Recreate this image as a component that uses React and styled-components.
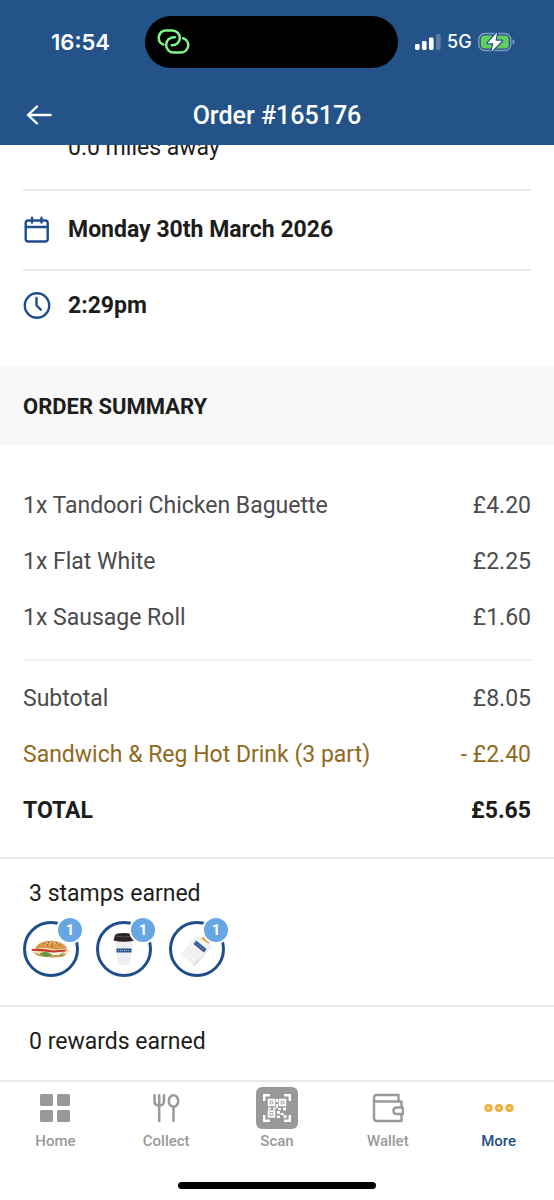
import styled, { createGlobalStyle } from "styled-components";

const GlobalStyle = createGlobalStyle`
    * {
        box-sizing: border-box;
    }
    body {
        margin: 0;
        background: #fff;
        color: #1d1d1b;
        font-family: Roboto, "Liberation Sans", sans-serif;
        font-size: 23px;
        line-height: 28px;
    }
    h1, h2, p, ul, dl, dd {
        margin: 0;
        padding: 0;
    }
    button {
        padding: 0;
        border: 0;
        background: none;
        font: inherit;
        color: inherit;
        cursor: pointer;
    }
`

const items = [
    { name: "1x Tandoori Chicken Baguette", price: "£4.20" },
    { name: "1x Flat White", price: "£2.25" },
    { name: "1x Sausage Roll", price: "£1.60" },
];

const totals = [
    { name: "Subtotal", price: "£8.05" },
    { name: "Sandwich & Reg Hot Drink (3 part)", price: "- £2.40", tone: "discount" },
    { name: "TOTAL", price: "£5.65", tone: "total" },
];

const stamps = [
    { name: "Baguette", count: 1, art: <BaguetteArt /> },
    { name: "Hot drink", count: 1, art: <CupArt /> },
    { name: "Sausage roll", count: 1, art: <BagArt /> },
];

const tabs = [
    { name: "Home", icon: <HomeIcon /> },
    { name: "Collect", icon: <CollectIcon /> },
    { name: "Scan", icon: <ScanIcon /> },
    { name: "Wallet", icon: <WalletIcon /> },
    { name: "More", icon: <MoreIcon />, active: true },
];

function App() {
    return (
        <Page>
            <GlobalStyle />
            <Header>
                <StatusBar>
                    <Clock>16:54</Clock>
                    <Island>
                        <LinkIcon />
                    </Island>
                    <StatusRight>
                        <SignalIcon />
                        <span>5G</span>
                        <BatteryIcon />
                    </StatusRight>
                </StatusBar>
                <TitleBar>
                    <BackButton aria-label="Back">
                        <BackIcon />
                    </BackButton>
                    <Title>Order #165176</Title>
                </TitleBar>
            </Header>
            <Content>
                <Details>
                    <Distance>0.0 miles away</Distance>
                    <DetailRow>
                        <CalendarIcon />
                        <p>Monday 30th March 2026</p>
                    </DetailRow>
                    <DetailRow>
                        <TimeIcon />
                        <p>2:29pm</p>
                    </DetailRow>
                </Details>
                <SectionTitle>ORDER SUMMARY</SectionTitle>
                <Summary>
                    <PriceList>
                        {items.map((item) => (
                            <PriceRow key={item.name}>
                                <dt>{item.name}</dt>
                                <dd>{item.price}</dd>
                            </PriceRow>
                        ))}
                    </PriceList>
                    <PriceList>
                        {totals.map((item) => (
                            <PriceRow key={item.name} $tone={item.tone}>
                                <dt>{item.name}</dt>
                                <dd>{item.price}</dd>
                            </PriceRow>
                        ))}
                    </PriceList>
                </Summary>
                <Earned>
                    <EarnedTitle>3 stamps earned</EarnedTitle>
                    <StampList>
                        {stamps.map((stamp) => (
                            <Stamp key={stamp.name} aria-label={stamp.name}>
                                {stamp.art}
                                <Badge>{stamp.count}</Badge>
                            </Stamp>
                        ))}
                    </StampList>
                </Earned>
                <Earned>
                    <EarnedTitle>0 rewards earned</EarnedTitle>
                </Earned>
            </Content>
            <Footer>
                <TabBar>
                    {tabs.map((tab) => (
                        <Tab key={tab.name} href="#" $active={tab.active}>
                            <TabIcon>{tab.icon}</TabIcon>
                            {tab.name}
                        </Tab>
                    ))}
                </TabBar>
                <HomeIndicator />
            </Footer>
        </Page>
    )
}

export default App;

function LinkIcon() {
    return (
        <svg width="33" height="28" viewBox="0 0 33 28" fill="none" stroke="#7cf58a" strokeWidth="2.5" strokeLinecap="round">
            <path d="M6.3 16.6A7.3 7.3 0 0 1 8.5 2.6H15.5A7.3 7.3 0 0 1 15.5 17.2H14.8" />
            <path d="M26.2 10.2A7.4 7.4 0 0 1 23.8 24.6H16.8A7.7 7.7 0 0 1 16.8 9.2H17.8" />
        </svg>
    )
}

function SignalIcon() {
    return (
        <svg width="26" height="18" viewBox="0 0 26 18" fill="#fff">
            <rect x="0" y="11" width="4.6" height="6" rx="1.4" />
            <rect x="7" y="8" width="4.6" height="9" rx="1.4" />
            <rect x="14" y="4.5" width="4.6" height="12.5" rx="1.4" />
            <rect x="21" y="1" width="4.6" height="16" rx="1.4" opacity="0.25" />
        </svg>
    )
}

function BatteryIcon() {
    return (
        <svg width="37" height="20" viewBox="0 0 37 20">
            <rect x="0.8" y="1.5" width="32" height="17" rx="6" fill="none" stroke="#7c9cc0" strokeWidth="1.5" />
            <path d="M34.5 7.2Q36.6 8 36.6 10T34.5 12.8Z" fill="#7c9cc0" />
            <rect x="2.8" y="3.5" width="28" height="13" rx="4" fill="#65cc5e" />
            <path d="M19 0.5L9.5 11.2H15.5L13.5 19.5L24 8.8H17.5Z" fill="#fff" stroke="#235389" strokeWidth="2.4" paintOrder="stroke" strokeLinejoin="round" />
        </svg>
    )
}

function BackIcon() {
    return (
        <svg width="26" height="22" viewBox="0 0 26 22" fill="none" stroke="#fff" strokeWidth="2.4" strokeLinecap="round" strokeLinejoin="round">
            <path d="M24.6 10H2M11 1.5L2 10L11 18.5" />
        </svg>
    )
}

function CalendarIcon() {
    return (
        <svg width="28" height="28" viewBox="0 0 28 28" fill="none" stroke="#1f4e8a" strokeWidth="2.4" strokeLinecap="round">
            <rect x="2.7" y="4.5" width="22" height="21" rx="2.5" />
            <path d="M3 11H25M9 1.8V6.5M18.5 1.8V6.5" />
        </svg>
    )
}

function TimeIcon() {
    return (
        <svg width="28" height="28" viewBox="0 0 28 28" fill="none" stroke="#1f4e8a" strokeWidth="2.4" strokeLinecap="round" strokeLinejoin="round">
            <circle cx="14" cy="13.5" r="12.2" />
            <path d="M13.5 6V13.5L17.8 17.7" />
        </svg>
    )
}

function BaguetteArt() {
    return (
        <svg width="40" height="18" viewBox="0 0 40 18">
            <path d="M2 12Q20 18 36 13L33 16.5Q20 18.5 7 16Z" fill="#d79a4c" />
            <path d="M1 9.5L10 10L38 9L39 12L30 14L20 13L10 15L4 12Z" fill="#f3e3c4" />
            <path d="M8 14Q14 10 20 14T31 13.5L34 11L30 16L22 15L15 17Z" fill="#5f9445" />
            <path d="M0.5 9Q12 8 22 10.5L36 9.5L34 11.5L22 12.5Q10 10.5 1 11Z" fill="#c33a26" />
            <path d="M4 9.5Q5 4 12 2Q20 -0.5 29 2.5Q35 5 36 8.5Q28 10.5 20 9Q12 7.5 4 9.5Z" fill="#d8994c" />
            <path d="M10 4Q20 0.5 30 4Q20 3 10 4Z" fill="#e8b56f" />
            <path d="M13 3.5h1M17 2.5h1M21 4h1M25 3h1M16 5h1M28 5h1M20 6h1" stroke="#6f4321" />
        </svg>
    )
}

function CupArt() {
    return (
        <svg width="24" height="34" viewBox="0 0 24 34">
            <path d="M3 8H21L18.5 31Q18 33 12 33T5.5 31Z" fill="#eeeff2" />
            <path d="M1.5 8.5L3 3Q4 1 12 1T21 3L22.5 8.5Q12 11 1.5 8.5Z" fill="#2b2527" />
            <path d="M3.5 4Q12 6 20.5 4" fill="none" stroke="#5b5355" />
            <path d="M4.5 16.5H19.5V20.5H4.5Z" fill="#2f5892" />
            <path d="M6 18.5H18" stroke="#a9bad6" strokeDasharray="1 1" />
        </svg>
    )
}

function BagArt() {
    return (
        <svg width="34" height="34" viewBox="0 0 34 34">
            <path d="M16.5 3L32 14L14.5 34L0.5 22.5Z" fill="#f0f1f3" />
            <path d="M21 6.5L23.5 4.5L30 10L28.5 11.8Z" fill="#e5a64c" />
            <path d="M32 14L14.5 34L13.5 33Z" fill="#d0d2d6" />
            <path d="M16 8.5L26.5 17L24 20.5L13.5 12Z" fill="#2f5892" />
            <path d="M15.5 10.7L24.7 18.2" stroke="#a9bad6" strokeDasharray="1 1" />
        </svg>
    )
}

function HomeIcon() {
    return (
        <svg width="30" height="30" viewBox="0 0 30 30" fill="#999">
            <rect x="0" y="1" width="13" height="12" rx="1.5" />
            <rect x="17" y="1" width="13" height="12" rx="1.5" />
            <rect x="0" y="17" width="13" height="12" rx="1.5" />
            <rect x="17" y="17" width="13" height="12" rx="1.5" />
        </svg>
    )
}

function CollectIcon() {
    return (
        <svg width="28" height="30" viewBox="0 0 28 30" fill="none" stroke="#999" strokeWidth="2.5" strokeLinecap="round">
            <path d="M2.5 2.2V8Q2.5 12.5 7.2 12.5T12 8V2.2M7.2 2.2V28" />
            <ellipse cx="21.5" cy="8" rx="4.7" ry="5.8" />
            <path d="M21.5 14V28" />
        </svg>
    )
}

function ScanIcon() {
    return (
        <svg width="42" height="42" viewBox="0 0 42 42">
            <rect width="42" height="42" rx="6" fill="#999" />
            <g fill="none" stroke="#fff" strokeWidth="2.4">
                <path d="M8.2 14V8.2H14M28 8.2H33.8V14M33.8 28V33.8H28M14 33.8H8.2V28" />
                <path d="M12.7 12.7H18.3V18.3H12.7ZM23.7 12.7H29.3V18.3H23.7ZM12.7 24.2H18.3V29.8H12.7Z" strokeWidth="2" />
            </g>
            <path d="M14.5 14.5h2v2h-2zM25.5 14.5h2v2h-2zM14.5 26h2v2h-2zM20 12h2v3h-2zM20 17h2v4h-2zM12 20.5h3v2h-3zM17 20.5h3v2h-3zM22 21h3v2h-3zM27 20.5h3v3h-3zM21 24h3v3h-3zM24.5 26h3v2h-3zM27.5 28h3v3h-3zM21 28.5h3v2.5h-3z" fill="#fff" />
        </svg>
    )
}

function WalletIcon() {
    return (
        <svg width="32" height="30" viewBox="0 0 32 30" fill="none" stroke="#999" strokeWidth="2.4" strokeLinejoin="round">
            <path d="M26.5 8V2H4Q2 2 2 5V25Q2 28 5 28H29.5V21M2 6Q2 8.5 5 8.5H29.5V14.5" />
            <path d="M30.8 14.5H25Q21.5 14.5 21.5 17.8T25 21H30.8Z" />
        </svg>
    )
}

function MoreIcon() {
    return (
        <svg width="30" height="10" viewBox="0 0 30 10" fill="#fbe3b4" stroke="#efad36" strokeWidth="2.6">
            <circle cx="4.5" cy="5" r="2.8" />
            <circle cx="15" cy="5" r="2.8" />
            <circle cx="25.5" cy="5" r="2.8" />
        </svg>
    )
}

const Page = styled.div`
    display: flex;
    flex-direction: column;
    min-height: 100vh;
`
const Header = styled.header`
    position: sticky;
    top: 0;
    z-index: 1;
    background: #235389;
    color: #fff;
`
const StatusBar = styled.div`
    display: grid;
    grid-template-columns: 1fr 253px 1fr;
    align-items: center;
    padding: 16px 11px 0 0;
`
const Clock = styled.p`
    padding-left: 16px;
    text-align: center;
    font-family: Inter, sans-serif;
    font-size: 22px;
    font-weight: 600;
`
const Island = styled.div`
    display: flex;
    align-items: center;
    height: 52px;
    padding-left: 12px;
    border-radius: 26px;
    background: #000;
`
const StatusRight = styled.div`
    display: flex;
    align-items: center;
    gap: 6px;
    padding-left: 17px;
    font-family: Inter, sans-serif;
    font-size: 18px;
    font-weight: 500;
`
const TitleBar = styled.div`
    display: grid;
    grid-template-columns: 1fr auto 1fr;
    align-items: center;
    height: 77px;
    padding: 18px 26px 0;
`
const BackButton = styled.button`
    display: flex;
    justify-self: start;
`
const Title = styled.h1`
    font-size: 25px;
    font-weight: 500;
    line-height: 32px;
`
const Content = styled.main`
    flex: 1;
    overflow: hidden;
`
const Details = styled.section`
    padding: 0 23px 25px;
`
const Distance = styled.p`
    margin-top: -11px;
    padding: 0 0 27px 45px;
`
const DetailRow = styled.div`
    display: flex;
    align-items: center;
    gap: 17px;
    height: 80px;
    border-top: 2px solid #e8e8e8;
    font-weight: 700;
    & + & {
        height: 72px;
    }
`
const SectionTitle = styled.h2`
    padding: 27px 23px 24px;
    background: #f8f8f8;
    font-size: 22px;
    font-weight: 700;
`
const Summary = styled.section`
    padding: 33px 23px 18px;
`
const PriceList = styled.dl`
    & + & {
        margin-top: 13px;
        padding-top: 10px;
        border-top: 2px solid #efefef;
    }
`
const toneColors = {
    discount: "#8f6a1c",
    total: "#1d1d1b",
};
const PriceRow = styled.div`
    display: flex;
    justify-content: space-between;
    padding: 14px 0;
    color: ${({ $tone }) => toneColors[$tone] || "#4b4b4d"};
    font-weight: ${({ $tone }) => ($tone === "total" ? 700 : 400)};
`
const Earned = styled.section`
    padding: 21px 23px 28px;
    border-top: 2px solid #e8e8e8;
    &:last-child {
        padding-bottom: 24px;
    }
`
const EarnedTitle = styled.h2`
    padding-left: 6px;
    font-size: 23px;
    font-weight: 400;
`
const StampList = styled.ul`
    display: flex;
    gap: 17px;
    margin-top: 13px;
    list-style: none;
`
const Stamp = styled.li`
    position: relative;
    display: flex;
    align-items: center;
    justify-content: center;
    width: 56px;
    height: 56px;
    border: 3px solid #1f4e8a;
    border-radius: 50%;
`
const Badge = styled.span`
    position: absolute;
    top: -8px;
    right: -8px;
    width: 28px;
    height: 28px;
    border: 2px solid #fff;
    border-radius: 50%;
    background: #66a7e3;
    color: #fff;
    font-size: 15px;
    font-weight: 700;
    line-height: 24px;
    text-align: center;
`
const Footer = styled.footer`
    position: sticky;
    bottom: 0;
    border-top: 2px solid #e8e8e8;
    background: #fff;
`
const TabBar = styled.nav`
    display: grid;
    grid-template-columns: repeat(5, 1fr);
    padding-top: 4px;
`
const Tab = styled.a`
    display: flex;
    flex-direction: column;
    align-items: center;
    gap: 1px;
    color: ${({ $active }) => ($active ? "#1f4e8a" : "#999")};
    font-size: 15px;
    font-weight: 500;
    line-height: 20px;
    text-decoration: none;
`
const TabIcon = styled.span`
    display: flex;
    align-items: center;
    height: 44px;
`
const HomeIndicator = styled.div`
    width: 198px;
    height: 7px;
    margin: 31px auto 11px;
    border-radius: 4px;
    background: #000;
`
